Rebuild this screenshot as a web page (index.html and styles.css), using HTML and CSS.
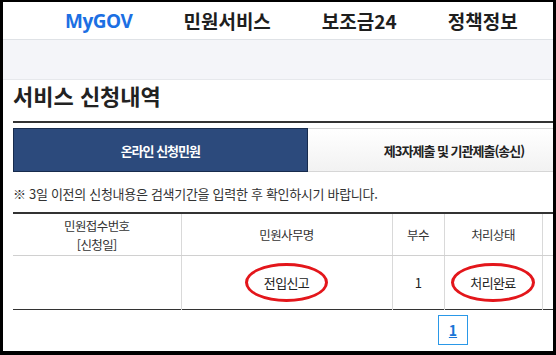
FILE: index.html
```html
<!DOCTYPE html>
<html lang="ko">
<head>
    <meta charset="UTF-8">
    <meta name="viewport" content="width=device-width, initial-scale=1.0">
    <title>서비스 신청내역</title>
    <link rel="stylesheet" href="styles.css">
</head>
<body>
    <div class="frame">
        <div class="topbar">
            <a class="nav-item brand">MyGOV</a>
            <a class="nav-item">민원서비스</a>
            <a class="nav-item">보조금24</a>
            <a class="nav-item">정책정보</a>
        </div>
        <div class="subbar"></div>

        <div class="content">
            <h1 class="page-title">서비스 신청내역</h1>

            <div class="tabs">
                <div class="tab active">온라인 신청민원</div>
                <div class="tab">제3자제출 및 기관제출(송신)</div>
                <div class="tab"></div>
            </div>

            <p class="notice">※ 3일 이전의 신청내용은 검색기간을 입력한 후 확인하시기 바랍니다.</p>

            <table class="list">
                <colgroup>
                    <col style="width: 168px">
                    <col style="width: 211px">
                    <col style="width: 52px">
                    <col style="width: 98px">
                    <col>
                </colgroup>
                <thead>
                    <tr>
                        <th>민원접수번호<br>[신청일]</th>
                        <th>민원사무명</th>
                        <th>부수</th>
                        <th>처리상태</th>
                        <th></th>
                    </tr>
                </thead>
                <tbody>
                    <tr>
                        <td></td>
                        <td><span class="mark">전입신고</span></td>
                        <td>1</td>
                        <td><span class="mark">처리완료</span></td>
                        <td></td>
                    </tr>
                </tbody>
            </table>

            <div class="paging">
                <a class="page current">1</a>
            </div>
        </div>
    </div>
</body>
</html>
```

FILE: styles.css
```css
html, body {
    margin: 0;
    padding: 0;
    background-color: #000;
}

body {
    font-family: "Noto Sans CJK KR", "Noto Sans", sans-serif;
    color: #222;
}

.frame {
    box-sizing: border-box;
    height: 355px;
    width: 556px;
    border-style: solid;
    border-color: #000;
    border-width: 2px 3px 4px 3px;
    background-color: #fff;
    overflow: hidden;
}

/* top navigation */
.topbar {
    height: 37px;
    border-bottom: 1px solid #dfe2e6;
    display: flex;
    align-items: center;
    gap: 51px;
    padding-left: 62px;
}

.nav-item {
    font-size: 19px;
    font-weight: bold;
    color: #1e1e1e;
    white-space: nowrap;
    line-height: 26px;
}

.nav-item.brand {
    font-family: "Open Sans", "Noto Sans", sans-serif;
    font-size: 19px;
    color: #1c6fe3;
    letter-spacing: -0.5px;
}

.subbar {
    height: 39px;
    background-color: #f4f5f9;
    border-bottom: 1px solid #e6e8ec;
}

/* page body */
.content {
    width: 880px;
    padding-left: 10px;
}

.page-title {
    margin: 0;
    font-size: 22px;
    font-weight: bold;
    line-height: 30px;
    color: #222;
    padding-bottom: 11px;
    border-bottom: 2px solid #333;
}

.tabs {
    display: flex;
    margin-top: 5px;
}

.tab {
    flex: 1;
    box-sizing: border-box;
    height: 44px;
    display: flex;
    align-items: center;
    justify-content: center;
    font-size: 13px;
    font-weight: bold;
    letter-spacing: -1px;
    color: #222;
    background: linear-gradient(#fff, #f2f2f2);
    border-top: 1px solid #d6d6d6;
    border-bottom: 1px solid #d6d6d6;
}

.tab.active {
    background: #2c4a7c;
    color: #fff;
    border: 1px solid #172b4d;
}

.notice {
    margin: 12px 0 8px;
    font-size: 13px;
    line-height: 20px;
    letter-spacing: -0.3px;
    color: #333;
}

/* result table */
.list {
    width: 100%;
    table-layout: fixed;
    border-collapse: collapse;
    border-top: 2px solid #333;
    border-bottom: 1px solid #333;
}

.list th,
.list td {
    border-left: 1px solid #d9d9d9;
    text-align: center;
    font-size: 12.5px;
    color: #333;
    letter-spacing: -0.6px;
    padding: 0;
}

.list th:first-child,
.list td:first-child {
    border-left: none;
}

.list th {
    height: 41px;
    font-weight: normal;
    line-height: 19px;
    border-bottom: 1px solid #d0d0d0;
}

.list td {
    height: 53px;
    font-size: 13px;
    color: #222;
}

.mark {
    position: relative;
    display: inline-block;
    line-height: 18px;
}

.mark::after {
    content: "";
    position: absolute;
    left: -19px;
    right: -19px;
    top: -11px;
    bottom: -10px;
    border: 3px solid #e3161b;
    border-radius: 50%;
}

/* paging */
.paging {
    display: flex;
    justify-content: center;
    margin-top: 5px;
}

.page {
    box-sizing: border-box;
    width: 30px;
    height: 30px;
    display: flex;
    align-items: center;
    justify-content: center;
    border: 1px solid #2a98e8;
    color: #1a75d6;
    font-size: 14px;
    font-weight: bold;
    text-decoration: underline;
}
```
